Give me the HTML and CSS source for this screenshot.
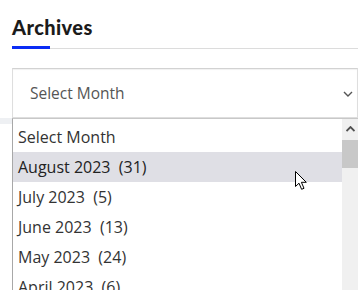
FILE: index.html
```html
<!DOCTYPE html>
<html>
<head>
<meta charset="utf-8">
<link rel="stylesheet" href="styles.css">
</head>
<body>
<div class="widget">
  <h2 class="title">Archives</h2>
  <div class="rule"><span class="accent"></span><span class="line"></span></div>
  <div class="select">
    <span class="select-label">Select Month</span>
    <svg class="chevron" width="10" height="6" viewBox="0 0 10 6"><path d="M1 1 L5 5 L9 1" fill="none" stroke="#555" stroke-width="1.4"/></svg>
  </div>
  <div class="popup-row">
    <div class="gutter"></div>
    <div class="popup">
      <ul class="options">
        <li class="option">Select Month</li>
        <li class="option active">August 2023&nbsp; (31)</li>
        <li class="option">July 2023&nbsp; (5)</li>
        <li class="option">June 2023&nbsp; (13)</li>
        <li class="option">May 2023&nbsp; (24)</li>
        <li class="option">April 2023&nbsp; (6)</li>
      </ul>
      <div class="scrollbar">
        <div class="scroll-btn"><svg width="9" height="6" viewBox="0 0 9 6"><path d="M0.5 5 L4.5 1 L8.5 5" fill="none" stroke="#505050" stroke-width="1.8"/></svg></div>
        <div class="thumb"></div>
      </div>
      <svg class="cursor" width="14" height="20" viewBox="0 0 14 20"><path d="M0.5 0.5 L0.5 15.5 L4 12.2 L6.6 18.3 L9 17.3 L6.4 11.3 L11.3 11.3 Z" fill="#fff" stroke="#000" stroke-width="1"/></svg>
    </div>
  </div>
</div>
</body>
</html>
```
FILE: styles.css
```css
html, body {
  margin: 0;
  padding: 0;
  background: #fff;
  overflow: hidden;
}
.widget {
  padding-left: 12px;
  padding-top: 14px;
}
.title {
  margin: 0;
  font-family: "Lato", "DejaVu Sans", sans-serif;
  font-weight: 900;
  font-size: 20px;
  line-height: 26px;
  color: #1b1b1b;
  letter-spacing: 0.4px;
}
.rule {
  display: flex;
  align-items: flex-end;
  height: 3px;
  margin-top: 6px;
}
.accent {
  width: 38px;
  height: 3px;
  background: #0b2cf5;
}
.line {
  flex: 1;
  height: 1px;
  background: #dcdcdc;
}
.select {
  margin-top: 19px;
  height: 48px;
  border: 1px solid #dedede;
  border-top-color: #d2d2d2;
  box-shadow: inset 0 1px 1px rgba(0,0,0,0.06);
  display: flex;
  align-items: center;
  justify-content: space-between;
  padding: 0 4px 0 17px;
  font-family: "Open Sans", sans-serif;
  font-size: 15.5px;
  color: #555;
}
.chevron {
  margin-top: 1px;
}
.popup-row {
  display: flex;
  margin-left: -12px;
}
.gutter {
  width: 12px;
  height: 6px;
  background: #eef0f3;
}
.popup {
  position: relative;
  flex: 1;
  display: flex;
  border-left: 1px solid #a8a8a8;
  border-top: 1px solid #c8c8c8;
  height: 180px;
  background: #fff;
}
.options {
  list-style: none;
  margin: 0;
  padding: 3px 0 0 0;
  flex: 1;
}
.option {
  height: 30px;
  line-height: 30px;
  padding-left: 5px;
  font-family: "Open Sans", sans-serif;
  font-size: 16px;
  color: #333;
}
.option.active {
  background: #dfdfe5;
  color: #222;
}
.scrollbar {
  width: 16px;
  background: #f0f0f0;
  display: flex;
  flex-direction: column;
}
.scroll-btn {
  height: 20px;
  display: flex;
  align-items: center;
  justify-content: center;
}
.thumb {
  margin-top: 1px;
  height: 28px;
  background: #c8c8c8;
}
.cursor {
  position: absolute;
  left: 282px;
  top: 52px;
}
```
